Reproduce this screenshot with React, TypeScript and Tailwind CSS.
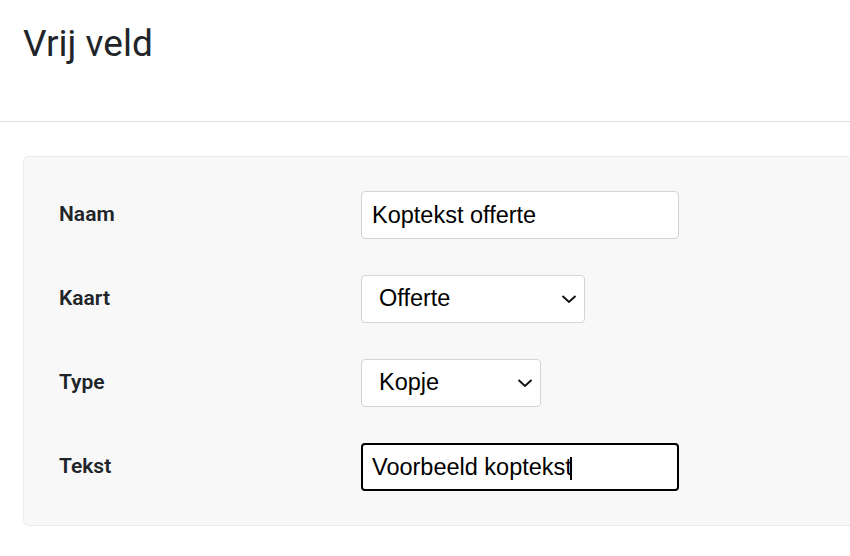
import { useState } from "react";

const Chevron = () => (
    <svg
        className="pointer-events-none absolute right-[8px] top-1/2 -translate-y-1/2"
        width="16"
        height="9"
        viewBox="0 0 16 9"
        fill="none"
    >
        <path d="M1.5 1.5 8 7.5 14.5 1.5" stroke="#111" strokeWidth="2" />
    </svg>
);

export default function App() {
    const [naam, setNaam] = useState("Koptekst offerte");
    const [kaart, setKaart] = useState("Offerte");
    const [type, setType] = useState("Kopje");
    const [tekst, setTekst] = useState("Voorbeeld koptekst");

    const rows = [
        {
            label: "Naam",
            field: (
                <input
                    className="h-[48px] w-[318px] rounded-[4px] border border-[#d4d4d4] bg-white px-[10px] text-[23.5px] text-black outline-none"
                    value={naam}
                    onChange={(e) => setNaam(e.target.value)}
                />
            ),
        },
        {
            label: "Kaart",
            field: (
                <div className="relative w-[224px]">
                    <select
                        className="h-[48px] w-full appearance-none rounded-[4px] border border-[#d4d4d4] bg-white pl-[17px] text-[23.5px] text-black outline-none"
                        value={kaart}
                        onChange={(e) => setKaart(e.target.value)}
                    >
                        <option>Offerte</option>
                        <option>Factuur</option>
                    </select>
                    <Chevron />
                </div>
            ),
        },
        {
            label: "Type",
            field: (
                <div className="relative w-[180px]">
                    <select
                        className="h-[48px] w-full appearance-none rounded-[4px] border border-[#d4d4d4] bg-white pl-[17px] text-[23.5px] text-black outline-none"
                        value={type}
                        onChange={(e) => setType(e.target.value)}
                    >
                        <option>Kopje</option>
                        <option>Tekst</option>
                    </select>
                    <Chevron />
                </div>
            ),
        },
        {
            label: "Tekst",
            field: (
                <div className="relative">
                    <input
                        className="h-[48px] w-[318px] rounded-[4px] border-2 border-black bg-white px-[9px] text-[23.5px] text-black outline-none caret-black"
                        value={tekst}
                        onChange={(e) => setTekst(e.target.value)}
                    />
                    {/* caret as in the screenshot */}
                    <span className="pointer-events-none absolute left-[209px] top-[14px] h-[23px] w-[2px] bg-black" />
                </div>
            ),
        },
    ];

    return (
        <div className="min-h-[556px] bg-white font-['Roboto',sans-serif] text-[#212529] [&_input]:font-['Liberation_Sans',Arial,sans-serif] [&_select]:font-['Liberation_Sans',Arial,sans-serif]">
            <div className="h-[122px] border-b border-[#dedede] px-[23px] pt-[21px]">
                <h1 className="text-[37px] leading-[46px] font-normal">Vrij veld</h1>
            </div>

            <div className="pl-[23px] pt-[34px]">
                <div className="rounded-l-[6px] border border-r-0 border-[#ebebeb] bg-[#f8f8f8] py-[34px] pl-[35px]">
                    <div className="flex flex-col gap-[36px]">
                        {rows.map((row) => (
                            <div key={row.label} className="flex items-center">
                                <label className="w-[302px] text-[21px] font-semibold">{row.label}</label>
                                {row.field}
                            </div>
                        ))}
                    </div>
                </div>
            </div>
        </div>
    );
}
